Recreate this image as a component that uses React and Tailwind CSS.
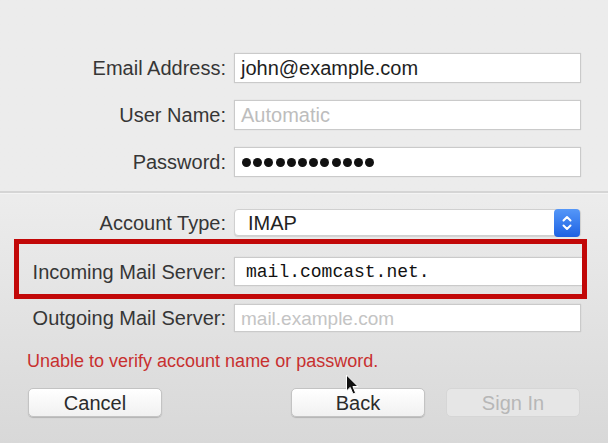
import React from 'react';

const label = "text-[20px] leading-none text-[#363636] text-right whitespace-nowrap";
const field = "bg-white border border-[#cacaca] shadow-[0_0_1px_rgba(0,0,0,0.12)] flex items-center leading-none";

function Row({ name, children, w = 226 }) {
  return (
    <div className="flex items-center">
      <div className={`${label} ${w === 226 ? 'w-[226px]' : 'w-[207px]'}`}>{name}</div>
      <div className="ml-[8px]">{children}</div>
    </div>
  );
}

function Stepper() {
  return (
    <div className="w-[26px] h-[28px] -my-[1px] rounded-[4px] bg-linear-to-b from-[#5597f8] to-[#1d61e3] flex items-center justify-center">
      <svg width="12" height="18" viewBox="0 0 12 18" fill="none" stroke="white" strokeWidth="2" strokeLinecap="round" strokeLinejoin="round">
        <path d="M2.5 6.5 L6 3 L9.5 6.5" />
        <path d="M2.5 11.5 L6 15 L9.5 11.5" />
      </svg>
    </div>
  );
}

function Button({ children, disabled }) {
  return (
    <button
      className={`w-[134px] h-[29px] rounded-[5px] border text-[20px] leading-none flex items-center justify-center ${
        disabled
          ? 'border-[#d6d6d6] bg-[#e6e6e6] text-[#b7b7b7]'
          : 'border-[#c3c3c3] bg-linear-to-b from-white to-[#f1f1f1] text-[#2b2b2b] shadow-[0_1px_1px_rgba(0,0,0,0.18)]'
      }`}
    >
      {children}
    </button>
  );
}

export default function App() {
  return (
    <div
      className="relative w-[608px] h-[443px] overflow-hidden bg-linear-to-b from-[#ececec] from-45% to-[#d8d8d8] flex flex-col"
      style={{ fontFamily: '"Liberation Sans", Arial, sans-serif' }}
    >
      <div className="pt-[53px] flex flex-col gap-[17px]">
        <Row name="Email Address:">
          <div className={`${field} w-[347px] h-[30px] pl-[6px] text-[20px] text-[#1e1e1e]`}>john@example.com</div>
        </Row>
        <Row name="User Name:">
          <div className={`${field} w-[347px] h-[30px] pl-[6px] text-[20px] text-[#bdbdbd]`}>Automatic</div>
        </Row>
        <Row name="Password:">
          <div className={`${field} w-[347px] h-[30px] pl-[7px] gap-[2.2px]`}>
            {Array.from({ length: 12 }).map((_, i) => (
              <span key={i} className="w-[9px] h-[9px] rounded-full bg-[#111]" />
            ))}
          </div>
        </Row>
      </div>

      <div className="mt-[14px] h-[2px] bg-[#d5d5d5] border-b border-[#f4f4f4] box-content" />

      <div className="mt-[15px]">
        <Row name="Account Type:">
          <div className="w-[347px] h-[27px] bg-white border border-[#d0d0d0] rounded-[4px] shadow-[0_1px_1px_rgba(0,0,0,0.1)] flex items-center justify-between">
            <span className="pl-[13px] text-[20px] leading-none text-[#222]">IMAP</span>
            <Stepper />
          </div>
        </Row>
      </div>

      <div className="mt-[3px] ml-[14px] w-[573px] h-[60px] border-[5px] border-[#c20808] pt-[13px]">
        <Row name="Incoming Mail Server:" w={207}>
          <div
            className={`${field} w-[348px] h-[29px] pl-[11px] border-r-0 text-[18px] text-[#111]`}
            style={{ fontFamily: '"Liberation Mono", "Courier New", monospace' }}
          >
            mail.comcast.net.
          </div>
        </Row>
      </div>

      <div className="mt-[5px]">
        <Row name="Outgoing Mail Server:">
          <div className={`${field} w-[347px] h-[28px] pl-[6px] text-[19px] text-[#c4c4c4]`}>mail.example.com</div>
        </Row>
      </div>

      <div className="mt-[19px] pl-[27px] text-[18px] leading-[20px] text-[#c8302f]">
        Unable to verify account name or password.
      </div>

      <div className="mt-[17px] flex pl-[28px]">
        <Button>Cancel</Button>
        <div className="ml-[129px]">
          <Button>Back</Button>
        </div>
        <div className="ml-[21px]">
          <Button disabled>Sign In</Button>
        </div>
      </div>

      <svg className="absolute left-[345px] top-[374px]" width="14" height="22" viewBox="0 0 14 22">
        <path d="M1.5 1 L1.5 17 L5.2 13.4 L8 20 L10.6 18.9 L7.9 12.5 L13 12.5 Z" fill="#111" stroke="#fff" strokeWidth="1" strokeLinejoin="round" />
      </svg>
    </div>
  );
}
